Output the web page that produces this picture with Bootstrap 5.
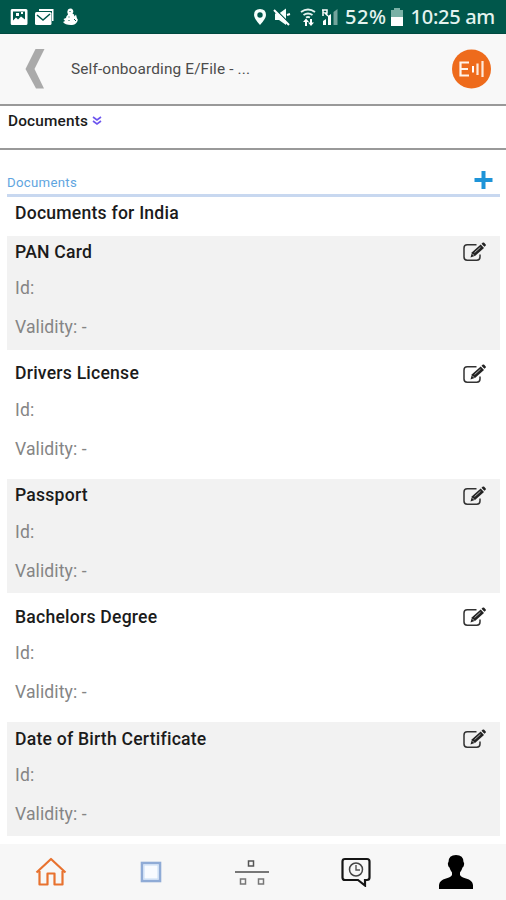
<!DOCTYPE html>
<html lang="en">
<head>
<meta charset="utf-8">
<meta name="viewport" content="width=device-width, initial-scale=1">
<title>Documents</title>
<link href="https://cdn.jsdelivr.net/npm/bootstrap@5.3.0/dist/css/bootstrap.min.css" rel="stylesheet">
<style>
body{font-family:Roboto,"Liberation Sans",sans-serif;color:#1b1b1b;height:900px;overflow:hidden;background:#fff}
svg{display:block;flex:none}
.status{height:34px;background:#00574b;color:#e4f3ef;border-bottom:1px solid #004a40;font:500 20px/36px "Noto Sans","Open Sans",sans-serif;padding:0 11px 0 10px}
.battery{margin-left:6px;letter-spacing:.6px}
.clock{letter-spacing:-.3px}
.topbar{height:70px;background:#f8f8f8;padding:0 15px 0 24px}
.topbar-title{font-size:15.4px;color:#4c4c4c;margin:1px 0 0 25px;letter-spacing:.13px}
.crumb{height:46px;border-top:2px solid #999;border-bottom:2px solid #999;padding:5px 8px;font-size:15.4px;line-height:21px;font-weight:500;letter-spacing:.15px}
.crumb-icon{margin-top:5px}
.section-head{height:47px;margin:0 6px 0 7px;border-bottom:3px solid #c8d8f0;padding:0 7px 1px 0}
.section-label{font-size:13.2px;line-height:21px;color:#5fa5e0;letter-spacing:.3px}
.group-title{height:38.5px;padding:5px 15px;font-size:17.6px;line-height:23px;font-weight:500;letter-spacing:.22px}
.doc-list{margin:0 6px 0 7px;display:flex;flex-direction:column;gap:7.7px}
.doc{height:114px;padding:4.3px 14px 0 8px;font-size:17.6px;line-height:24px}
.doc:nth-child(odd){background:#f2f2f2}
.doc-name{font-weight:500;letter-spacing:.22px}
.doc-icon{margin-top:1px}
.doc-line{color:#858585;letter-spacing:.1px}
.doc-line.first-line{margin-top:12.5px}
.doc-line.second-line{margin-top:15px}
.tabs{height:56px;background:#f7f7f7;padding-left:1px}
</style>
<script src="https://cdn.jsdelivr.net/npm/bootstrap@5.3.0/dist/js/bootstrap.bundle.min.js"></script>
</head>
<body class="d-flex flex-column">
<svg width="0" height="0" class="position-absolute"><defs>
<symbol id="edit" viewBox="0 0 24 20"><path d="M14.500 2.700H5.200Q2 2.700 2 5.900v9.200q0 3.200 3.200 3.200h9.600q3.200 0 3.200-3.200v-2.500" fill="none" stroke="#333" stroke-width="1.500"/><path d="M8.500 15.500l1.500-5.300 8.700-7.700 3.300 3.500-8.700 7.700z" fill="#222"/><path d="M19.500 1.800l1.400-1.200q.7-.5 1.300.2l1.500 1.600q.6.700-.1 1.300l-1.200 1.100z" fill="#222"/><path d="M12.500 10.600l6-5.400M10.300 11.800l2 2" stroke="#ddd" stroke-width=".8"/></symbol>
</defs></svg>
<header class="status d-flex align-items-center justify-content-between flex-shrink-0">
<div class="d-flex align-items-center">
<svg width="70" height="20" viewBox="0 0 70 20"><g fill="#fff"><path fill-rule="evenodd" d="M2 2h14q1.500 0 1.500 1.500v13q0 1.500-1.500 1.500H2Q.7 18 .7 16.500v-13Q.7 2 2 2zm1 2.500v9l3-3 2 2 3-3 4 3v-8z"/><path d="M6 6h3v3H6zM11 5h2v2h-2z"/><path d="M29 2h14.500v12H42V4H29z"/><rect x="25" y="5" width="16.500" height="13" rx="1.500"/><path d="M58 2.500q3-2 5 .5 1 2-.5 3.500 2 .5 2 3l1.500-2 1 4q1.500 1 0 3.500-2 3.500-6 3-6 0-8-3l2-1-1.500-2 2.500-1q0-2 2-3.500-1.500-2.500 0-5z"/></g><path d="M27 8l6 5 7-6" fill="none" stroke="#00574b" stroke-width="1.500"/><path d="M60 4v1M59 9.500v1M59 13v1M64 12l2 2" stroke="#00574b"/></svg>
</div>
<div class="d-flex align-items-center">
<svg width="87" height="22" viewBox="252 6 87 22"><g fill="#f5fffc"><path fill-rule="evenodd" d="M260 9q6 0 6 6 0 3.500-6 10-6-6.500-6-10 0-6 6-6zm0 3.300a2.700 2.700 0 100 5.400 2.700 2.700 0 000-5.400z"/><path d="M275 13.500h4l7-5v16.500l-7-5h-4z"/></g><path d="M275 9l16 16" stroke="#00574b" stroke-width="1.500"/><path d="M274 10l15 15M287 15l3-1" stroke="#fff" stroke-width="2"/><g fill="none" stroke="#e4f3ef" stroke-width="1.900"><path d="M301 12q7-5 14 0M303.500 15q4.500-3 9 0M306 17.500q2-1 4 0"/></g><path d="M303 22l3-3.500 3 3.500h-2v4h-2v-4zM308 22.500h2V19h2v3.500h2l-3 3.500z" fill="#fff"/><path d="M323 25v-4l3-2v6zM328 25v-9l3-2v11z" fill="#fff"/><path d="M333.500 25V12l4-3v16z" fill="#72a49c"/><path d="M322 10h5v3h-2l3 3M323 10v6" fill="none" stroke="#fff" stroke-width="1.500"/></svg>
<span class="battery">52%</span>
<svg width="12" height="20" viewBox="0 0 12 20" class="mx-1"><path d="M3 1h6v2h3v8H0V3h3z" fill="#7ab1a6"/><path d="M0 10h12v9H0z" fill="#fff"/></svg>
<span class="clock ps-1">10:25 am</span>
</div>
</header>
<nav class="topbar d-flex align-items-center flex-shrink-0">
<svg width="22" height="40" viewBox="0 0 22 40"><path d="M11.500 0H20.500L10.500 20 20 39.500H12L1.500 20z" fill="#aaa"/></svg>
<span class="topbar-title">Self-onboarding E/File - ...</span>
<svg class="ms-auto" width="40" height="40" viewBox="0 0 40 40"><circle cx="20.500" cy="20" r="19.500" fill="#ee6b1c"/><path d="M18 13.500H9.500v13H18M9.500 20H17" fill="none" stroke="#fff2e8" stroke-width="2.200"/><path d="M22 17v6.500" stroke="#fff" stroke-width="2"/><path d="M26.500 14.500v11.500M31.500 12v16" stroke="#ffe9da" stroke-width="2.200"/></svg>
</nav>
<div class="crumb d-flex flex-shrink-0"><span class="crumb-text">Documents</span>
<svg class="crumb-icon ms-1" width="10" height="10" viewBox="0 0 10 10"><path d="M1 1l4 3 4-3M1 5l4 3 4-3" fill="none" stroke="#6d55ee" stroke-width="1.600"/></svg></div>
<div class="section-head d-flex align-items-end justify-content-between flex-shrink-0">
<span class="section-label">Documents</span>
<svg width="19" height="19" viewBox="0 0 19 19" class="mb-1"><path d="M9.500 1v18M.5 10h18" stroke="#1e94d8" stroke-width="4"/></svg>
</div>
<div class="group-title flex-shrink-0"><span class="group-text">Documents for India</span></div>
<main class="doc-list flex-shrink-0">
<section class="doc"><div class="d-flex justify-content-between align-items-center"><span class="doc-name">PAN Card</span><svg class="doc-icon" width="24" height="20"><use href="#edit"/></svg></div><div class="doc-line first-line">Id:</div><div class="doc-line second-line">Validity: -</div></section>
<section class="doc"><div class="d-flex justify-content-between align-items-center"><span class="doc-name">Drivers License</span><svg class="doc-icon" width="24" height="20"><use href="#edit"/></svg></div><div class="doc-line first-line">Id:</div><div class="doc-line second-line">Validity: -</div></section>
<section class="doc"><div class="d-flex justify-content-between align-items-center"><span class="doc-name">Passport</span><svg class="doc-icon" width="24" height="20"><use href="#edit"/></svg></div><div class="doc-line first-line">Id:</div><div class="doc-line second-line">Validity: -</div></section>
<section class="doc"><div class="d-flex justify-content-between align-items-center"><span class="doc-name">Bachelors Degree</span><svg class="doc-icon" width="24" height="20"><use href="#edit"/></svg></div><div class="doc-line first-line">Id:</div><div class="doc-line second-line">Validity: -</div></section>
<section class="doc"><div class="d-flex justify-content-between align-items-center"><span class="doc-name">Date of Birth Certificate</span><svg class="doc-icon" width="24" height="20"><use href="#edit"/></svg></div><div class="doc-line first-line">Id:</div><div class="doc-line second-line">Validity: -</div></section>
</main>
<footer class="tabs d-flex mt-auto flex-shrink-0 align-items-center">
<div class="col d-flex justify-content-center"><svg width="32" height="30" viewBox="0 0 32 30"><path d="M1.500 15.500L16 2l14.500 13.500M4.500 14v13.500h8v-11h7v11h8V14" fill="none" stroke="#e8722f" stroke-width="2.200" stroke-linejoin="round"/></svg></div>
<div class="col d-flex justify-content-center"><svg width="22" height="22" viewBox="0 0 22 22"><rect x="2" y="2" width="18" height="18" fill="#f8fbff" stroke="#8fabd6" stroke-width="2.600"/><rect x="4" y="4" width="14" height="14" fill="none" stroke="#c6dcf5"/></svg></div>
<div class="col d-flex justify-content-center"><svg width="34" height="28" viewBox="0 0 34 28"><path d="M0 14h34" stroke="#777" stroke-width="2"/><g fill="none" stroke="#555" stroke-width="1.500"><rect x="13.500" y="3" width="5" height="5"/><rect x="5.500" y="21" width="5" height="5" stroke="#777"/><rect x="23.500" y="21" width="5" height="5" stroke="#777"/></g></svg></div>
<div class="col d-flex justify-content-center ps-1"><svg width="30" height="30" viewBox="0 0 30 30"><path d="M4 2h22q2.500 0 2.500 2.500v16q0 2.500-2.500 2.500h-2v5.500L17 23H4q-2.500 0-2.500-2.500v-16Q1.500 2 4 2z" fill="#f8f8f8" stroke="#151515" stroke-width="2.200"/><circle cx="15" cy="12.500" r="6.500" fill="none" stroke="#444" stroke-width="1.500"/><path d="M15 8v5h4" fill="none" stroke="#555" stroke-width="1.400"/></svg></div>
<div class="col d-flex justify-content-center"><svg width="34" height="34" viewBox="0 0 34 34"><path d="M17 0q7.500 0 7.500 7 1 .7.500 3t-1.500 2.500q-.8 3-2.500 5v2.500q1 2 6 3.500 6.500 1.500 7 6.500v4H0v-4q.5-5 7-6.500 5-1.500 6-3.500v-2.500q-1.700-2-2.500-5Q9.500 12.300 9 10t.5-3q0-7 7.500-7z" fill="#000"/></svg></div>
</footer>
</body>
</html>
